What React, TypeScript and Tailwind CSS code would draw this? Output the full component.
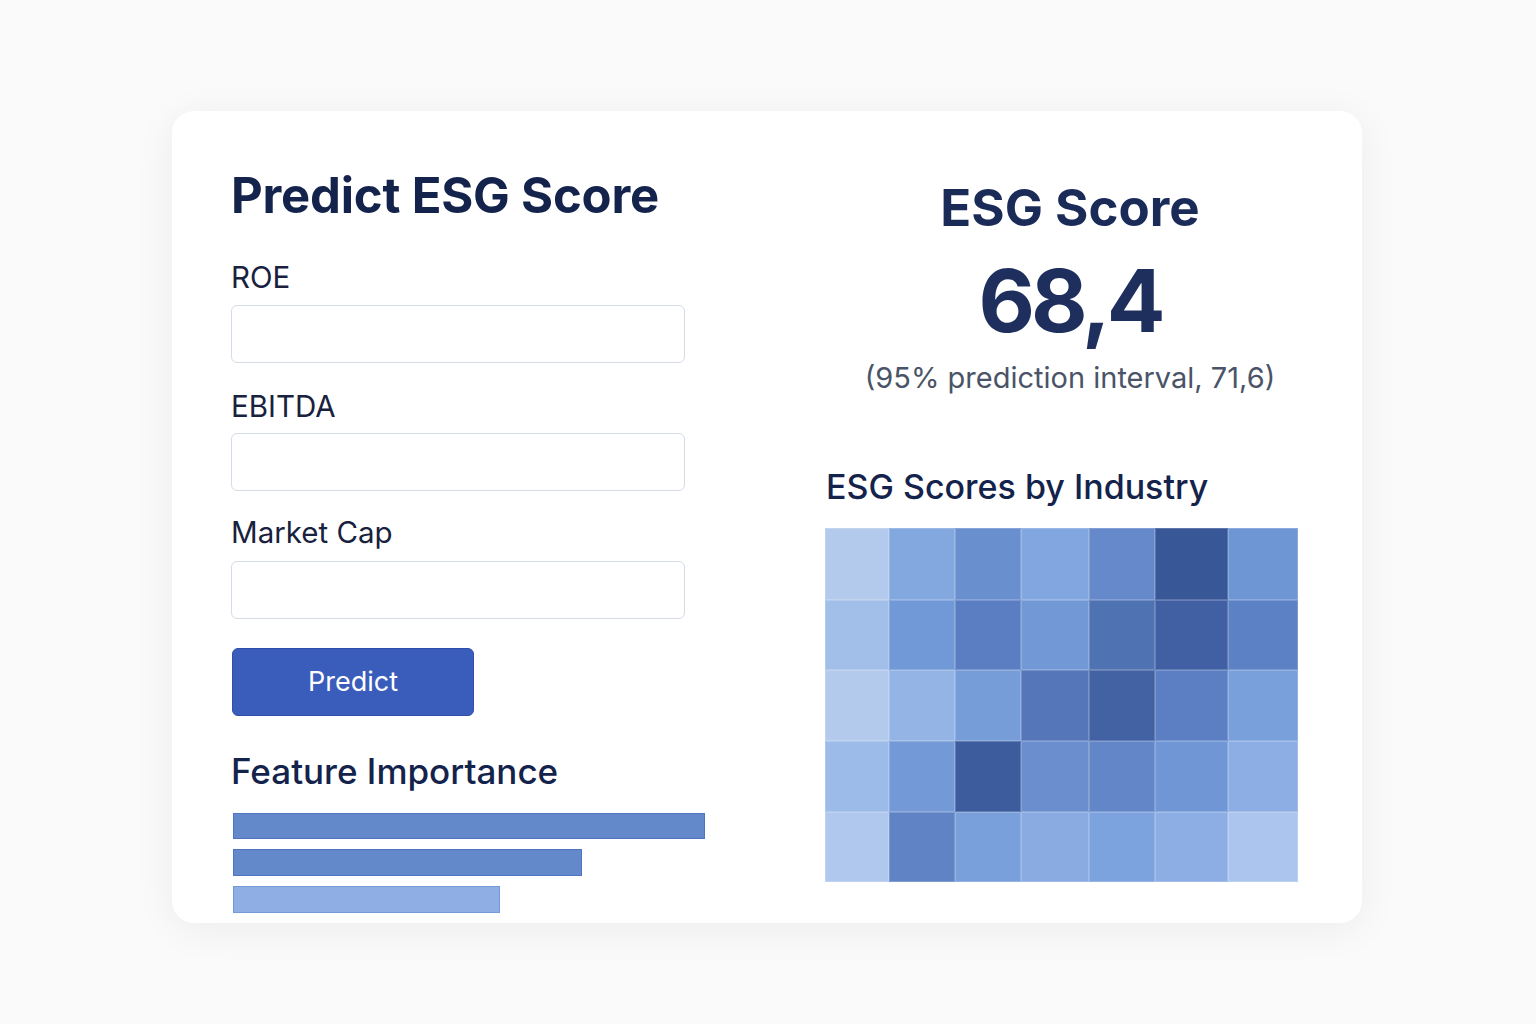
const heat = [
  ["#b3caed", "#83a8e0", "#6a8fce", "#82a6df", "#6589ca", "#375796", "#6f96d4"],
  ["#a2bfea", "#7299d7", "#5a7ec1", "#7398d6", "#4f72b2", "#4060a3", "#5c81c4"],
  ["#b3caec", "#94b4e5", "#779dd9", "#5577b9", "#4262a4", "#5b7fc2", "#7aa0dc"],
  ["#9cbbe9", "#739ad7", "#3d5c9e", "#6a8ece", "#6386c9", "#7096d6", "#8caee4"],
  ["#b0c8ed", "#5f83c4", "#7aa0db", "#89abe2", "#7da3de", "#8caee4", "#acc5ee"],
]

const bars = [
  { w: 472, cls: "h-[26px] bg-[#6489ca] border border-[#4f75c2]" },
  { w: 349, cls: "h-[27px] bg-[#6489ca] border border-[#4f75c2]" },
  { w: 267, cls: "h-[27px] bg-[#8eaee4] border border-[#739ad9]" },
  { w: 210, cls: "h-[27px] bg-[#c6d5ef]" },
]

function Field({ label, mt, inputMt }: { label: string; mt: string; inputMt: string }) {
  return (
    <>
      <label className={`${mt} block text-[29.5px] leading-[36px] text-[#18213d]`}>{label}</label>
      <input
        type="text"
        className={`${inputMt} block h-[58px] w-[454px] rounded-md border border-[#d5dce7] bg-white px-4 text-[22px] outline-none`}
      />
    </>
  )
}

export default function App() {
  return (
    <div className="min-h-screen bg-[#fafafa] pt-[111px] font-['Inter',sans-serif]">
      <div className="ml-[172px] h-[812px] w-[1190px] overflow-hidden rounded-[22px] bg-white shadow-[0_6px_40px_rgba(15,23,42,0.06)]">
        <div className="flex pl-[59px]">
          {/* form + feature importance */}
          <div className="w-[474px] pt-[56px]">
            <h1 className="text-[49px] font-bold leading-[58px] tracking-[-0.2px] text-[#14234b]">Predict ESG Score</h1>
            <Field label="ROE" mt="mt-[34px]" inputMt="mt-[10px]" />
            <Field label="EBITDA" mt="mt-[25px]" inputMt="mt-[9px]" />
            <Field label="Market Cap" mt="mt-[23px]" inputMt="mt-[11px]" />
            <button className="mt-[29px] ml-px h-[68px] w-[242px] rounded-[6px] border border-[#2f4fab] bg-[#3a5cba] text-[27px] text-white">
              Predict
            </button>
            <h2 className="mt-[33px] text-[35px] font-medium leading-[44px] text-[#14234b]">Feature Importance</h2>
            <div className="mt-[20px] ml-[2px] flex flex-col gap-[10px]">
              {bars.map((b, i) => (
                <div key={i} className={b.cls} style={{ width: b.w }} />
              ))}
            </div>
          </div>

          {/* result + heatmap */}
          <div className="ml-[120px] w-[490px] pt-[67px]">
            <div className="text-center">
              <h2 className="text-[51px] font-bold leading-[60px] text-[#1a2b58]">ESG Score</h2>
              <div className="mt-[13px] text-[87px] font-bold leading-[100px] tracking-[-4px] text-[#1e2f5e]">68,4</div>
              <p className="mt-[9px] text-[29px] leading-[36px] text-[#4a5468]">(95% prediction interval, 71,6)</p>
            </div>
            <h2 className="mt-[69px] ml-px text-[34px] font-medium leading-[44px] text-[#14234b]">ESG Scores by Industry</h2>
            <div className="mt-[19px] grid w-[473px] grid-cols-[64px_66px_66px_68px_66px_73px_70px] grid-rows-[72px_70px_71px_71px_70px]">
              {heat.flat().map((c, i) => (
                <div key={i} className="border-[0.5px] border-white/20" style={{ backgroundColor: c }} />
              ))}
            </div>
          </div>
        </div>
      </div>
    </div>
  )
}
